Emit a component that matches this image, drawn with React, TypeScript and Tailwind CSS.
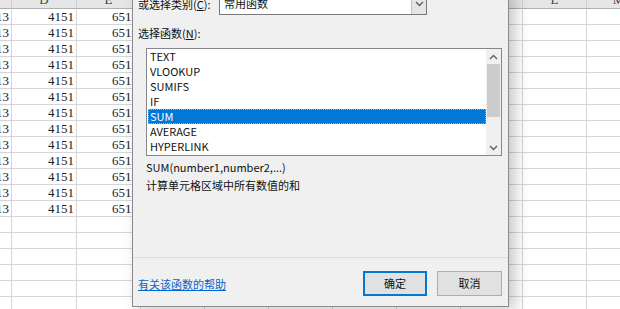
import React from "react";

const colHeads = ["C", "D", "E", "F", "G", "H", "I", "J", "K", "L", "M"];
const functions = ["TEXT", "VLOOKUP", "SUMIFS", "IF", "SUM", "AVERAGE", "HYPERLINK"];

const Chevron = ({ up = false }: { up?: boolean }) => (
  <svg width="9" height="6" viewBox="0 0 9 6" className="block">
    <polyline
      points={up ? "1,5 4.5,1.5 8,5" : "1,1 4.5,4.5 8,1"}
      fill="none"
      stroke="#606060"
      strokeWidth="1.4"
    />
  </svg>
);

const Sheet = () => {
  const rows = Array.from({ length: 19 }, (_, i) => i);
  return (
    <div className="-mt-[11px] grid grid-cols-[12px_65px_64px_64px_64px_64px_64px_64px_62px_64px_64px] font-['Liberation_Serif',serif] text-[13px] text-[#222]">
      {colHeads.map((h, c) => (
        <div
          key={h}
          className="h-[20px] bg-[#e6e6e6] border-r border-b border-r-[#d0d0d0] border-b-[#b0b0b0] flex items-end justify-center leading-[16px] text-[#444] overflow-hidden"
        >
          {c > 0 && h}
        </div>
      ))}
      {rows.map((r) =>
        colHeads.map((h, c) => (
          <div
            key={`${r}-${h}`}
            className="h-[16px] border-r border-b border-[#d6d6d6] bg-white flex items-center justify-end pr-[2px] leading-[15px] overflow-hidden whitespace-nowrap"
          >
            {r < 13 && c === 0 && "113"}
            {r < 13 && c === 1 && "4151"}
            {r < 13 && c === 2 && "6513"}
          </div>
        ))
      )}
    </div>
  );
};

const Dialog = () => (
  <div className="absolute left-[132px] top-[-10px] w-[377px] h-[317px] bg-[#f0f0f0] border border-[#8a8a8a] shadow-[6px_3px_14px_rgba(0,0,0,0.22)] flex flex-col font-['Noto_Sans_CJK_SC','Noto_Sans',sans-serif] text-[11px] text-[#111]">
    {/* category row */}
    <div className="flex items-center mt-[1px] pl-[5px]">
      <span className="w-[81px] whitespace-nowrap leading-[16px]">
        或选择类别(<span className="underline">C</span>):
      </span>
      <div className="w-[208px] h-[23px] bg-white border border-[#7a7a7a] flex items-stretch">
        <span className="flex-1 pl-[4px] flex items-center">常用函数</span>
        <span className="w-[15px] bg-[#e5e5e5] border-l border-[#c0c0c0] flex items-center justify-center">
          <Chevron />
        </span>
      </div>
    </div>

    <div className="pl-[5px] mt-[10px] leading-[16px]">
      选择函数(<span className="underline">N</span>):
    </div>

    {/* function list */}
    <div className="ml-[13px] mt-[7px] w-[356px] h-[108px] bg-white border border-[#828790] flex">
      <ul className="flex-1 pl-[1px] pt-0">
        {functions.map((f) => (
          <li
            key={f}
            className={`h-[15px] leading-[15px] pl-[2px] ${
              f === "SUM" ? "bg-[#0078d7] text-white outline outline-1 outline-dotted outline-[#e8a050] -outline-offset-1" : ""
            }`}
          >
            {f}
          </li>
        ))}
      </ul>
      <div className="w-[15px] bg-[#f0f0f0] flex flex-col items-center">
        <div className="h-[15px] flex items-center justify-center">
          <Chevron up />
        </div>
        <div className="w-[13px] h-[53px] bg-[#cdcdcd]" />
        <div className="flex-1" />
        <div className="h-[15px] flex items-center justify-center">
          <Chevron />
        </div>
      </div>
    </div>

    <div className="ml-[13px] mt-[3px] leading-[16px]">SUM(number1,number2,...)</div>
    <div className="ml-[13px] mt-[2px] leading-[16px]">计算单元格区域中所有数值的和</div>

    <div className="flex-1" />
    <div className="h-px bg-[#dcdcdc]" />

    <div className="flex items-center mt-[13px] mb-[10px] pl-[5px] pr-[6px]">
      <a className="text-[#0066cc] underline cursor-pointer leading-[16px]">有关该函数的帮助</a>
      <div className="flex-1" />
      <button className="w-[64px] h-[25px] bg-[#e1e1e1] border-2 border-[#0078d7] text-[#111]">确定</button>
      <button className="ml-[10px] w-[65px] h-[25px] bg-[#e1e1e1] border border-[#adadad] text-[#111]">取消</button>
    </div>
  </div>
);

export default function App() {
  return (
    <div className="relative w-[620px] h-[309px] overflow-hidden bg-white">
      <Sheet />
      <Dialog />
    </div>
  );
}
